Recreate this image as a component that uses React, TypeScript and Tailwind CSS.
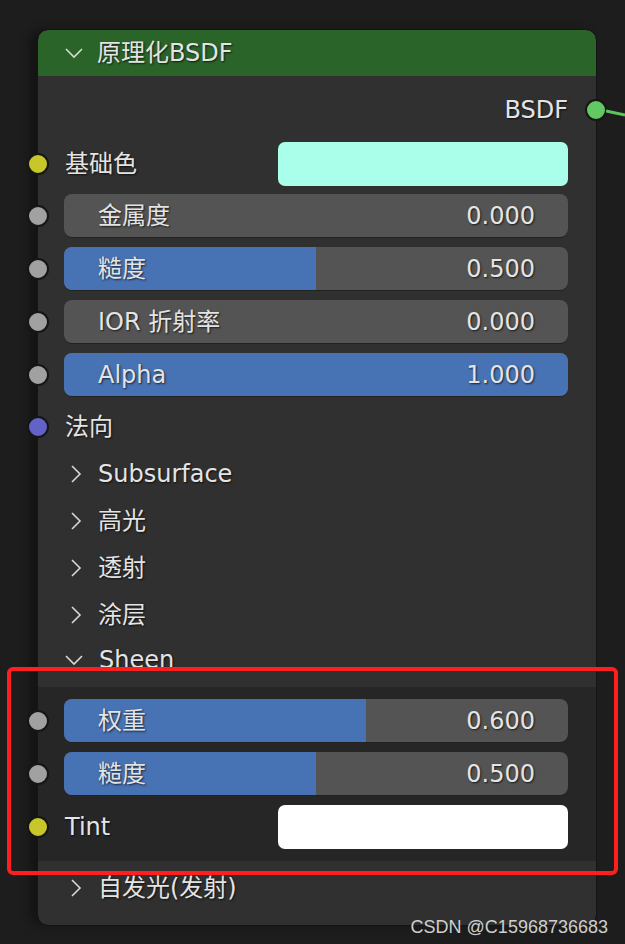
import React from "react";

const FONT = { fontFamily: '"DejaVu Sans", "Noto Sans CJK SC", sans-serif' };

function Socket({ color, side = "left" }: { color: string; side?: "left" | "right" }) {
  return (
    <span
      className={`absolute top-1/2 -translate-y-1/2 h-[22px] w-[22px] rounded-full border-2 border-[#161616] ${
        side === "left" ? "left-[-11px]" : "right-[-11px]"
      } ${color}`}
    />
  );
}

function Chevron({ down = false }: { down?: boolean }) {
  return down ? (
    <svg width="22" height="14" viewBox="0 0 22 14" className="shrink-0">
      <polyline points="3,3 11,11 19,3" fill="none" stroke="#d8d8d8" strokeWidth="1.6" />
    </svg>
  ) : (
    <svg width="14" height="22" viewBox="0 0 14 22" className="shrink-0">
      <polyline points="3,3 11,11 3,19" fill="none" stroke="#d8d8d8" strokeWidth="1.6" />
    </svg>
  );
}

function Slider({ label, value, fill, socket = "bg-[#a1a1a1]" }: { label: string; value: string; fill: number; socket?: string }) {
  return (
    <div className="relative pl-[26px] pr-[28px]">
      <Socket color={socket} />
      <div className="relative h-[43px] overflow-hidden rounded-[8px] bg-[#545454] shadow-[0_1px_0_#222]">
        <div className="absolute inset-y-0 left-0 bg-[#4772b3]" style={{ width: `${fill * 100}%` }} />
        <div className="relative flex h-full items-center justify-between pl-[34px] pr-[33px]">
          <span>{label}</span>
          <span>{value}</span>
        </div>
      </div>
    </div>
  );
}

function ColorRow({ label, swatch, socket }: { label: string; swatch: string; socket: string }) {
  return (
    <div className="relative flex h-[44px] items-center pl-[27px] pr-[28px]">
      <Socket color={socket} />
      <span className="flex-1">{label}</span>
      <div className={`h-full w-[290px] rounded-[7px] ${swatch}`} />
    </div>
  );
}

function PanelRow({ label, open = false }: { label: string; open?: boolean }) {
  return (
    <div className={`flex h-[47px] items-center ${open ? "gap-[14px] pl-[25px]" : "gap-[15px] pl-[31px]"}`}>
      <Chevron down={open} />
      <span>{label}</span>
    </div>
  );
}

export default function App() {
  return (
    <div
      className="relative h-[944px] w-[625px] overflow-hidden bg-[#1d1d1d] text-[24px] leading-none text-[#e4e4e4] [text-shadow:1px_1px_2px_rgba(0,0,0,0.7)]"
      style={FONT}
    >
      <div className="pt-[30px] pl-[38px]">
        <div className="relative w-[558px] rounded-[10px] bg-[#303030] shadow-[-8px_0_10px_rgba(0,0,0,0.35)] outline outline-1 outline-[#151515]">
          {/* header */}
          <div className="flex h-[46px] items-center gap-[12px] rounded-t-[10px] bg-[#2b6429] pl-[25px]">
            <Chevron down />
            <span>原理化BSDF</span>
          </div>

          {/* output */}
          <div className="relative mt-[14px] flex h-[40px] items-center justify-end pr-[28px]">
            <span>BSDF</span>
            <Socket color="bg-[#63c763]" side="right" />
          </div>

          <div className="mt-[12px]">
            <ColorRow label="基础色" swatch="bg-[#a9ffe9]" socket="bg-[#c7c729]" />
          </div>

          <div className="mt-[8px] flex flex-col gap-[10px]">
            <Slider label="金属度" value="0.000" fill={0} />
            <Slider label="糙度" value="0.500" fill={0.5} />
            <Slider label="IOR 折射率" value="0.000" fill={0} />
            <Slider label="Alpha" value="1.000" fill={1} />
          </div>

          <div className="relative mt-[7px] flex h-[47px] items-center pl-[27px]">
            <Socket color="bg-[#6363c7]" />
            <span>法向</span>
          </div>

          <PanelRow label="Subsurface" />
          <PanelRow label="高光" />
          <PanelRow label="透射" />
          <PanelRow label="涂层" />
          <div className="-mt-[2px]">
            <PanelRow label="Sheen" open />
          </div>

          <div className="mt-[4px] flex flex-col gap-[10px] bg-[#262626] py-[12px]">
            <Slider label="权重" value="0.600" fill={0.6} />
            <Slider label="糙度" value="0.500" fill={0.5} />
            <ColorRow label="Tint" swatch="bg-white" socket="bg-[#c7c729]" />
          </div>

          <div className="mt-[4px] pb-[14px]">
            <div className="flex h-[46px] items-center gap-[15px] pl-[31px]">
              <Chevron />
              <span>自发光(发射)</span>
            </div>
          </div>
        </div>
      </div>

      {/* link leaving the BSDF socket */}
      <svg className="absolute left-[606px] top-[106px]" width="19" height="12" viewBox="0 0 19 12">
        <line x1="0" y1="5" x2="19" y2="9" stroke="#5ec45e" strokeWidth="3" />
      </svg>

      {/* red annotation box */}
      <div className="pointer-events-none absolute left-[7px] top-[667px] h-[208px] w-[611px] rounded-[6px] border-4 border-[#ff1f1f]" />

      <div
        className="absolute right-[17px] bottom-[8px] text-[18px] text-[#cfcfcf] [text-shadow:none]"
        style={{ fontFamily: '"Liberation Sans", Arial, sans-serif' }}
      >
        CSDN @C15968736683
      </div>
    </div>
  );
}
